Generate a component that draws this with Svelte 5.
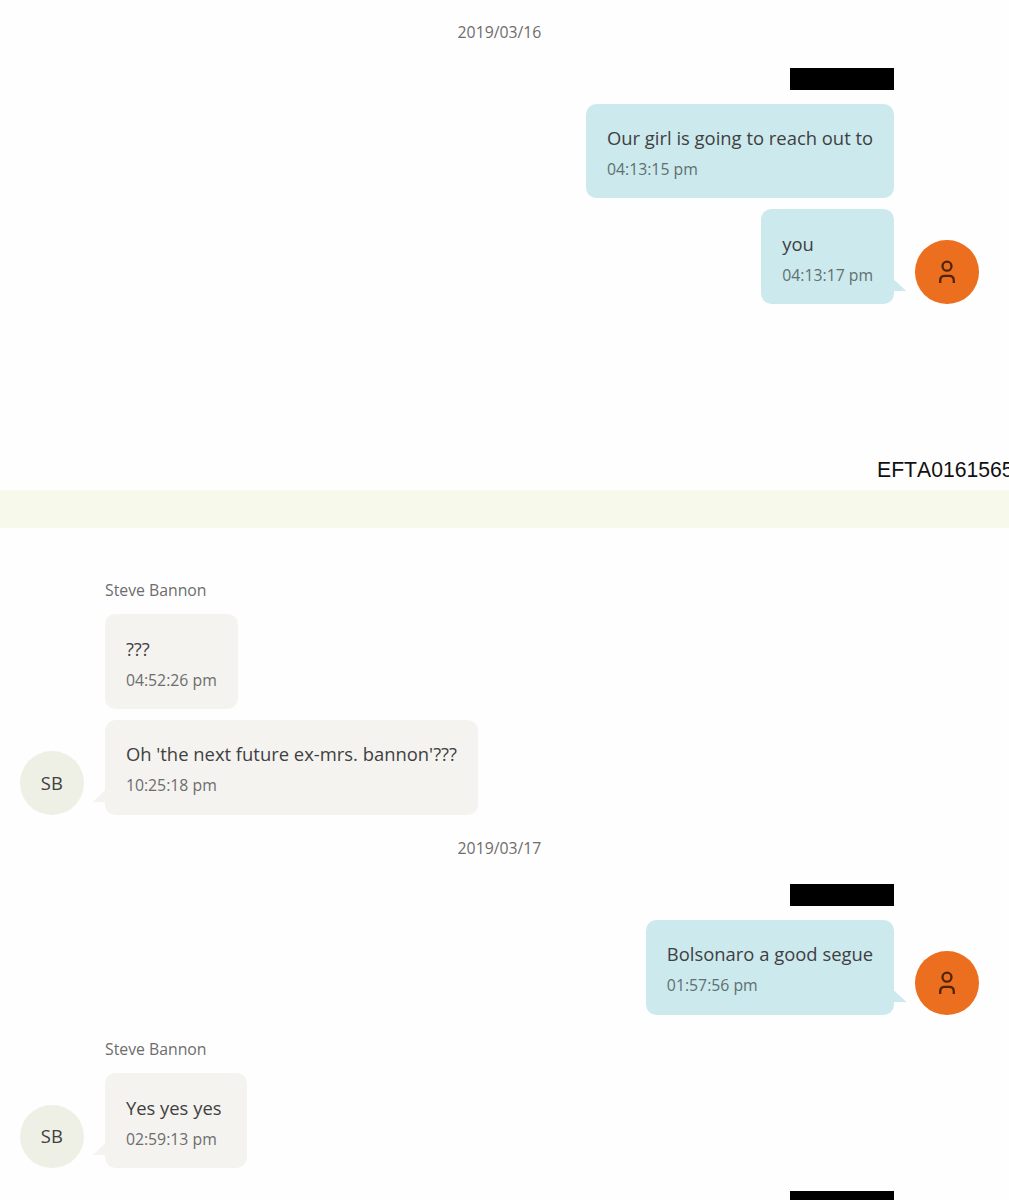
<script>
const pages = [
  {
    stamp: 'EFTA0161565',
    items: [
      { date: '2019/03/16' },
      {
        own: true,
        messages: [
          { text: 'Our girl is going to reach out to', time: '04:13:15 pm' },
          { text: 'you', time: '04:13:17 pm' }
        ]
      }
    ]
  },
  {
    items: [
      {
        name: 'Steve Bannon',
        initials: 'SB',
        messages: [
          { text: '???', time: '04:52:26 pm' },
          { text: "Oh 'the next future ex-mrs. bannon'???", time: '10:25:18 pm' }
        ]
      },
      { date: '2019/03/17' },
      {
        own: true,
        messages: [{ text: 'Bolsonaro a good segue', time: '01:57:56 pm' }]
      },
      {
        name: 'Steve Bannon',
        initials: 'SB',
        messages: [{ text: 'Yes yes yes ', time: '02:59:13 pm' }]
      },
      { own: true, messages: [] }
    ]
  }
];
</script>

<main>
  {#each pages as page}
    <section class="page">
      {#each page.items as item}
        {#if item.date}
          <p class="date">{item.date}</p>
        {:else}
          <article class="group" class:own={item.own}>
            {#if item.messages.length}
              <div class="avatar">
                {#if item.own}
                  <svg viewBox="0 0 18 24">
                    <circle cx="9" cy="6.2" r="4.5"/>
                    <path d="M2.2,23 V20.4 Q2.2,15.8 6.8,15.8 H11.2 Q15.8,15.8 15.8,20.4 V23"/>
                  </svg>
                {:else}
                  <span>{item.initials}</span>
                {/if}
              </div>
            {/if}
            <div class="thread">
              {#if item.own}
                <div class="redacted"></div>
              {:else}
                <p class="name">{item.name}</p>
              {/if}
              {#each item.messages as message}
                <div class="bubble">
                  <p class="text">{message.text}</p>
                  <p class="time">{message.time}</p>
                </div>
              {/each}
            </div>
          </article>
        {/if}
      {/each}
      {#if page.stamp}
        <footer>{page.stamp}</footer>
      {/if}
    </section>
  {/each}
</main>

<style>
:global(body) {
  margin: 0;
  background-color: #fefefe;
}

main {
  height: 1200px;
  overflow: hidden;
  font-family: "Open Sans", "Noto Sans", sans-serif;
  color: #3f4040;
}

p {
  margin: 0;
}

.page {
  box-sizing: border-box;
  padding: 20px 30px 0 20px;
}

.page:first-child {
  display: flex;
  flex-direction: column;
  height: 490px;
}

.page + .page {
  border-top: 38px solid #f7faeb;
  padding-top: 50.6px;
}

.date {
  height: 24px;
  margin-bottom: 23.8px;
  font-size: 15.8px;
  line-height: 24px;
  text-align: center;
  color: #6d6d6d;
}

.group + .date {
  margin-top: 21.5px;
}

.group {
  display: flex;
  align-items: flex-end;
  gap: 21.3px;
}

.group + .group {
  margin-top: 22.6px;
}

.own {
  flex-direction: row-reverse;
}

.thread {
  display: flex;
  flex-direction: column;
  align-items: flex-start;
  gap: 10.8px;
}

.own .thread {
  align-items: flex-end;
}

.name,
.redacted {
  height: 22px;
  margin-bottom: 3px;
}

.name {
  font-size: 15.8px;
  line-height: 23px;
  color: #6d6d6d;
}

.redacted {
  width: 104px;
  background-color: #000;
}

/* thread without an avatar keeps the same right edge */
.thread:only-child {
  margin-right: 85px;
}

.bubble {
  position: relative;
  box-sizing: border-box;
  height: 94.9px;
  padding: 20.3px 20.9px;
  border-radius: 10.5px;
  background-color: #f4f3f0;
}

.own .bubble {
  background-color: #cce9ee;
}

.bubble:last-child::after {
  content: "";
  position: absolute;
  bottom: 13px;
  left: -12.5px;
  width: 13px;
  height: 12px;
  background-color: inherit;
  clip-path: polygon(100% 0, 100% 100%, 0 100%);
}

.own .bubble:last-child::after {
  left: auto;
  right: -12.5px;
  clip-path: polygon(0 0, 100% 100%, 0 100%);
}

.text {
  font-size: 18.42px;
  line-height: 27px;
  white-space: pre;
}

.time {
  margin-top: 6px;
  font-size: 15.8px;
  line-height: 24px;
  color: #6d6d6d;
  white-space: nowrap;
}

.own .time {
  color: #60706f;
}

.avatar {
  display: flex;
  align-items: center;
  justify-content: center;
  flex: none;
  width: 63.7px;
  height: 63.7px;
  border-radius: 50%;
  font-size: 18.4px;
  background-color: #eff0e5;
}

.avatar span {
  padding-bottom: 1px;
}

.own .avatar {
  background-color: #eb6f1e;
}

svg {
  width: 18px;
  height: 24px;
  fill: none;
  stroke: #4e240c;
  stroke-width: 2.3px;
}

footer {
  margin: auto -30px 8px 0;
  padding-left: 857px;
  font: 21.2px/24px "Liberation Sans", Arial, sans-serif;
  font-kerning: none;
  color: #111;
  white-space: nowrap;
}
</style>
